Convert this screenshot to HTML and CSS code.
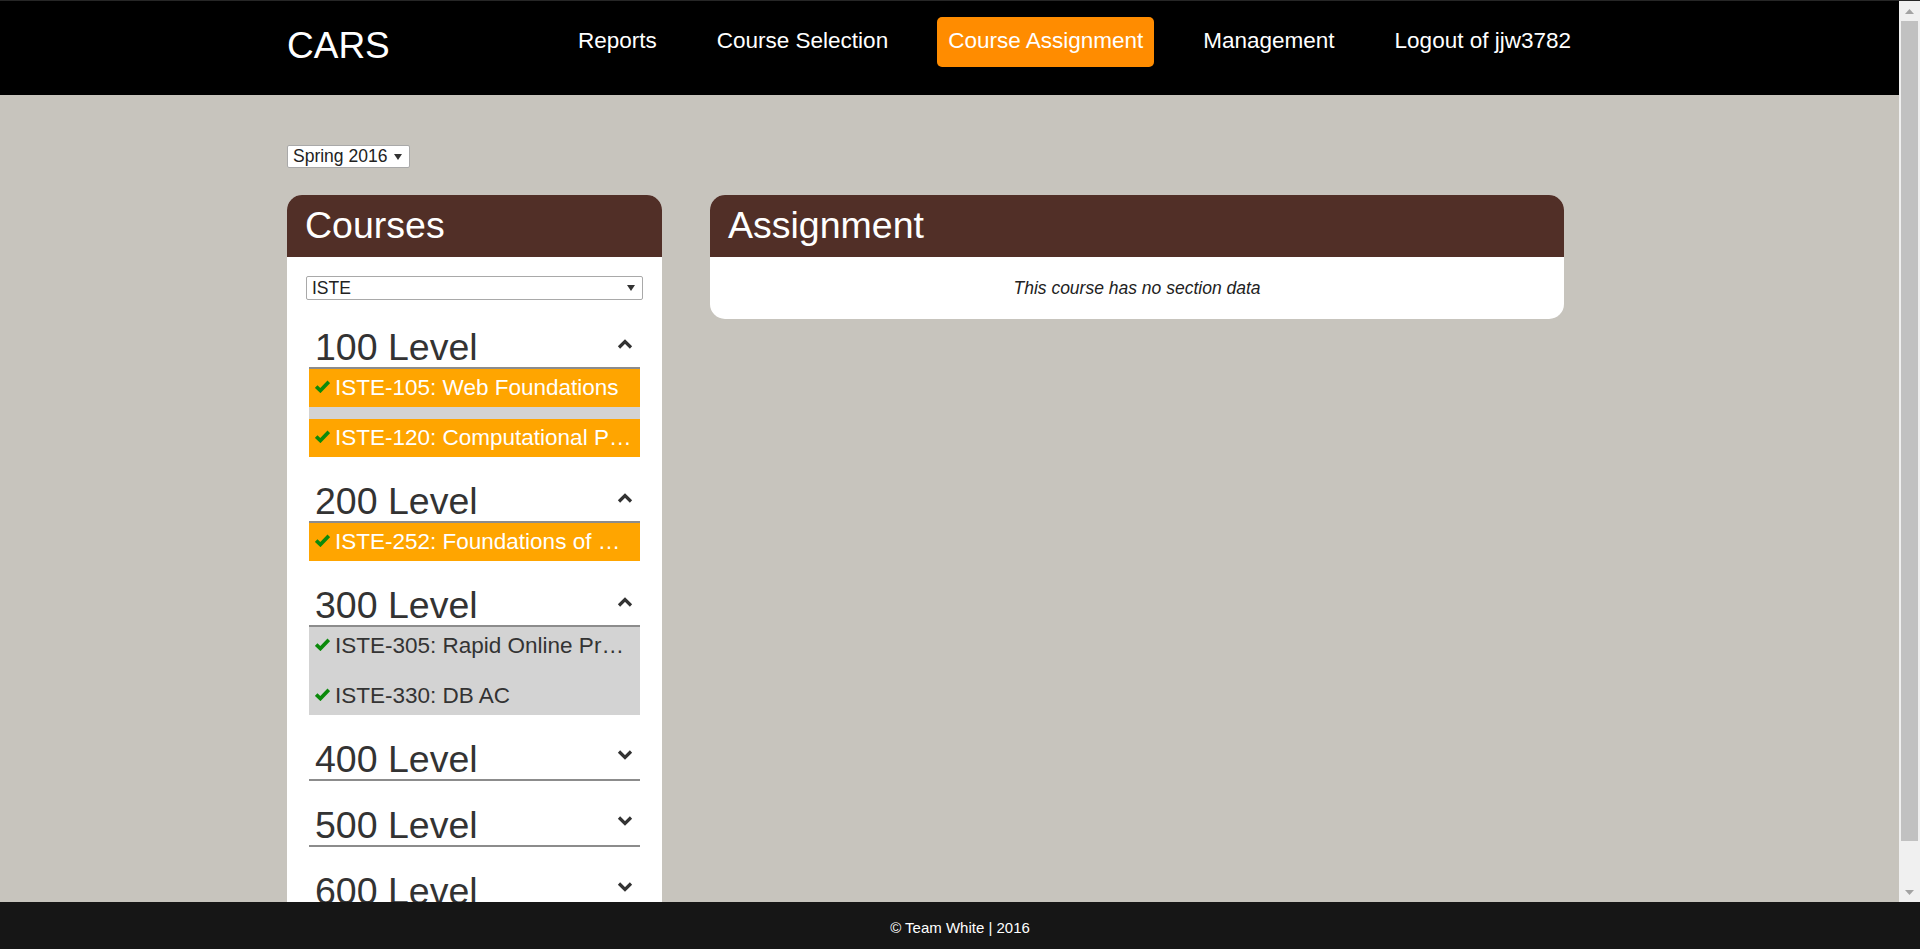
FILE: index.html
```html
<!DOCTYPE html>
<html lang="en">
<head>
<meta charset="utf-8">
<title>CARS - Course Assignment</title>
<link rel="stylesheet" href="styles.css">
</head>
<body>
<div class="viewport">
  <div class="page">
    <header class="topbar">
      <div class="container topbar-inner">
        <div class="brand">CARS</div>
        <nav class="nav">
          <a class="nav-link" href="#">Reports</a>
          <a class="nav-link" href="#">Course Selection</a>
          <a class="nav-link active" href="#">Course Assignment</a>
          <a class="nav-link" href="#">Management</a>
          <a class="nav-link" href="#">Logout of jjw3782</a>
        </nav>
      </div>
    </header>

    <main class="container content">
      <div class="select term-select">
        <span>Spring 2016</span>
        <svg class="caret" viewBox="0 0 8 6" width="8" height="6"><path d="M0 0H8L4 6Z" fill="#333"/></svg>
      </div>

      <div class="panels">
        <section class="panel courses-panel">
          <h2 class="panel-title">Courses</h2>
          <div class="panel-body">
            <div class="select dept-select">
              <span>ISTE</span>
              <svg class="caret" viewBox="0 0 8 6" width="8" height="6"><path d="M0 0H8L4 6Z" fill="#333"/></svg>
            </div>

            <div class="level">
              <div class="level-head">
                <span>100 Level</span>
                <svg class="chevron" viewBox="0 0 16 11"><polyline points="2,9.5 8,3.5 14,9.5" fill="none" stroke="#333" stroke-width="3.2"/></svg>
              </div>
              <ul class="course-list">
                <li class="course selected">
                  <svg class="check" viewBox="0 0 15 13"><polyline points="1.2,6.6 5.4,10.6 13.8,1.8" fill="none" stroke="#0b8a0b" stroke-width="3.6"/></svg>
                  <span class="course-name">ISTE-105: Web Foundations</span>
                </li>
                <li class="course selected">
                  <svg class="check" viewBox="0 0 15 13"><polyline points="1.2,6.6 5.4,10.6 13.8,1.8" fill="none" stroke="#0b8a0b" stroke-width="3.6"/></svg>
                  <span class="course-name">ISTE-120: Computational Problem Solving</span>
                </li>
              </ul>
            </div>

            <div class="level">
              <div class="level-head">
                <span>200 Level</span>
                <svg class="chevron" viewBox="0 0 16 11"><polyline points="2,9.5 8,3.5 14,9.5" fill="none" stroke="#333" stroke-width="3.2"/></svg>
              </div>
              <ul class="course-list">
                <li class="course selected">
                  <svg class="check" viewBox="0 0 15 13"><polyline points="1.2,6.6 5.4,10.6 13.8,1.8" fill="none" stroke="#0b8a0b" stroke-width="3.6"/></svg>
                  <span class="course-name">ISTE-252: Foundations of Mobile Design</span>
                </li>
              </ul>
            </div>

            <div class="level">
              <div class="level-head">
                <span>300 Level</span>
                <svg class="chevron" viewBox="0 0 16 11"><polyline points="2,9.5 8,3.5 14,9.5" fill="none" stroke="#333" stroke-width="3.2"/></svg>
              </div>
              <ul class="course-list">
                <li class="course">
                  <svg class="check" viewBox="0 0 15 13"><polyline points="1.2,6.6 5.4,10.6 13.8,1.8" fill="none" stroke="#0b8a0b" stroke-width="3.6"/></svg>
                  <span class="course-name">ISTE-305: Rapid Online Prototyping</span>
                </li>
                <li class="course">
                  <svg class="check" viewBox="0 0 15 13"><polyline points="1.2,6.6 5.4,10.6 13.8,1.8" fill="none" stroke="#0b8a0b" stroke-width="3.6"/></svg>
                  <span class="course-name">ISTE-330: DB AC</span>
                </li>
              </ul>
            </div>

            <div class="level">
              <div class="level-head">
                <span>400 Level</span>
                <svg class="chevron down" viewBox="0 0 16 11"><polyline points="2,2.5 8,8.5 14,2.5" fill="none" stroke="#333" stroke-width="3.2"/></svg>
              </div>
            </div>

            <div class="level">
              <div class="level-head">
                <span>500 Level</span>
                <svg class="chevron down" viewBox="0 0 16 11"><polyline points="2,2.5 8,8.5 14,2.5" fill="none" stroke="#333" stroke-width="3.2"/></svg>
              </div>
            </div>

            <div class="level">
              <div class="level-head">
                <span>600 Level</span>
                <svg class="chevron down" viewBox="0 0 16 11"><polyline points="2,2.5 8,8.5 14,2.5" fill="none" stroke="#333" stroke-width="3.2"/></svg>
              </div>
            </div>
          </div>
        </section>

        <section class="panel assign-panel">
          <h2 class="panel-title">Assignment</h2>
          <div class="panel-body">
            <p class="empty">This course has no section data</p>
          </div>
        </section>
      </div>
    </main>
  </div>

  <div class="scrollbar" aria-hidden="true">
    <div class="sb-btn"><svg viewBox="0 0 9 5" width="9" height="5"><path d="M0 5L4.5 0L9 5Z" fill="#a3a3a3"/></svg></div>
    <div class="sb-track"><div class="sb-thumb"></div></div>
    <div class="sb-btn"><svg viewBox="0 0 9 5" width="9" height="5"><path d="M0 0L4.5 5L9 0Z" fill="#a3a3a3"/></svg></div>
  </div>
</div>
<footer class="footer">© Team White | 2016</footer>
</body>
</html>
```

FILE: styles.css
```css
html, body {
  height: 100%;
}

body {
  margin: 0;
  box-sizing: border-box;
  border-top: 1px solid #262626;
  display: flex;
  flex-direction: column;
  overflow: hidden;
  background: #c7c4bd;
  font-family: "Liberation Sans", Arial, sans-serif;
}

.viewport {
  flex: 1;
  min-height: 0;
  display: flex;
}

.page {
  flex: 1;
  min-width: 0;
  overflow-y: auto;
  scrollbar-width: none;
}

/* decorative scrollbar column */
.scrollbar {
  flex: none;
  width: 21px;
  background: #f0f0f0;
  display: flex;
  flex-direction: column;
}

.sb-btn {
  flex: none;
  height: 20px;
  display: flex;
  align-items: center;
  justify-content: center;
}

.sb-track {
  flex: 1;
  padding: 0 2px;
}

.sb-thumb {
  height: 820px;
  background: #c1c1c1;
}

.container {
  width: 1325px;
  margin: 0 auto;
}

/* Top bar */
.topbar {
  background: #000;
  height: 94px;
}

.topbar-inner {
  display: flex;
  align-items: flex-start;
}

.brand {
  color: #fff;
  font-size: 37px;
  line-height: 40px;
  margin-top: 25px;
  width: 100px;
}

.nav {
  display: flex;
  gap: 38px;
  margin-left: 180px;
  margin-top: 16px;
}

.nav-link {
  color: #fff;
  font-size: 22.5px;
  line-height: 46px;
  padding: 1px 11px 3px;
  border-radius: 5px;
  text-decoration: none;
}

.nav-link.active {
  background: #ff8c00;
}

/* Content */
.content {
  padding-top: 50px;
  padding-bottom: 10px;
}

.select {
  display: flex;
  align-items: center;
  justify-content: space-between;
  box-sizing: border-box;
  background: #fff;
  border: 1px solid #a9a9a9;
  border-radius: 2px;
  color: #222;
  font-size: 17.5px;
  line-height: 21px;
  padding: 0 7px 0 5px;
}

.caret {
  flex: none;
}

.term-select {
  width: 123px;
  height: 23px;
}

.dept-select {
  height: 24px;
}

.panels {
  display: grid;
  grid-template-columns: 375px 854px;
  column-gap: 48px;
  align-items: start;
  margin-top: 27px;
}

.panel {
  background: #fff;
  border-radius: 15px;
  overflow: hidden;
}

.panel-title {
  margin: 0;
  background: #512f27;
  color: #fff;
  font-size: 37.5px;
  font-weight: normal;
  line-height: 42px;
  padding: 9px 18px 11px;
}

.courses-panel .panel-body {
  padding: 19px;
}

.level {
  margin: 24px 3px 0;
}

.dept-select + .level {
  margin-top: 27px;
}

.level-head {
  display: flex;
  justify-content: space-between;
  align-items: flex-start;
  color: #333;
  font-size: 37.5px;
  line-height: 40px;
  padding: 0 7px 0 6px;
  border-bottom: 2px solid #8c8c8c;
}

.chevron {
  flex: none;
  width: 16px;
  height: 11px;
  margin-top: 11px;
}

.chevron.down {
  margin-top: 10px;
}

.course-list {
  list-style: none;
  margin: 0;
  padding: 0;
  background: #d3d3d3;
  display: flex;
  flex-direction: column;
  gap: 12px;
}

.course {
  height: 38px;
  display: flex;
  align-items: center;
  gap: 5px;
  padding: 0 7px 0 6px;
  color: #333;
  font-size: 22.5px;
}

.course.selected {
  background: #ffa500;
  color: #fff;
}

.check {
  flex: none;
  width: 15px;
  height: 13px;
  margin-top: -3px;
}

.course-name {
  min-width: 0;
  overflow: hidden;
  white-space: nowrap;
  text-overflow: ellipsis;
}

.assign-panel .panel-body {
  padding: 20px;
  text-align: center;
}

.empty {
  margin: 0;
  color: #222;
  font-size: 17.5px;
  font-style: italic;
  line-height: 22px;
}

/* Footer */
.footer {
  flex: none;
  height: 47px;
  box-sizing: border-box;
  padding-top: 3px;
  background: #161616;
  color: #fff;
  font-size: 15px;
  display: flex;
  align-items: center;
  justify-content: center;
}
```
